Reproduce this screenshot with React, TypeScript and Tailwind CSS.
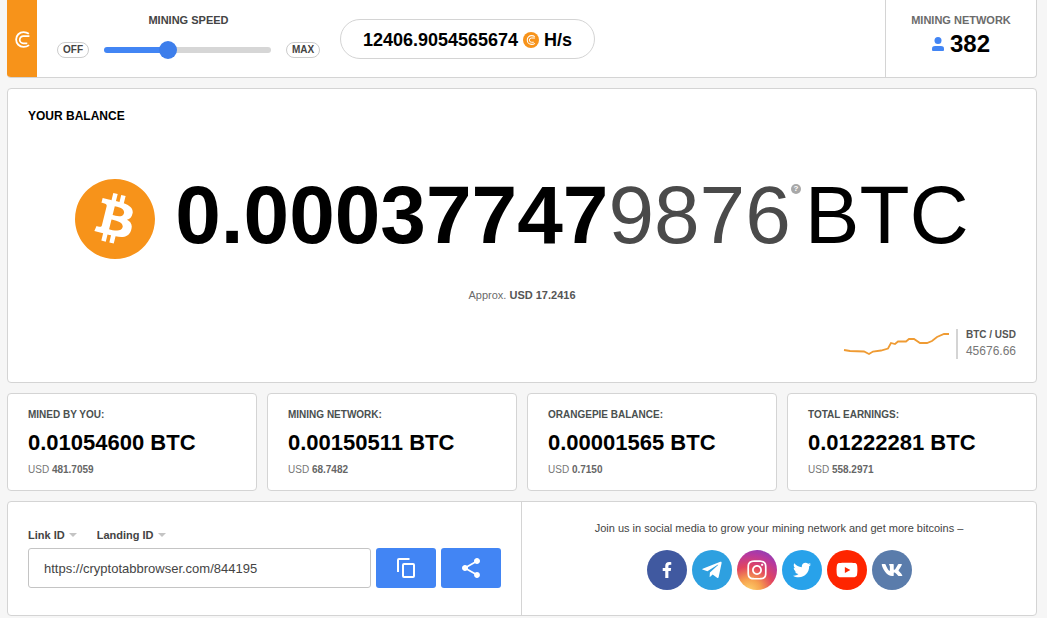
import { useState } from "react";
import { FaFacebookF, FaTelegramPlane, FaInstagram, FaTwitter, FaYoutube, FaVk } from "react-icons/fa";
import { MdShare } from "react-icons/md";
import { SiBitcoin } from "react-icons/si";

const stats = [
  { label: "MINED BY YOU:", btc: "0.01054600", usd: "481.7059" },
  { label: "MINING NETWORK:", btc: "0.00150511", usd: "68.7482" },
  { label: "ORANGEPIE BALANCE:", btc: "0.00001565", usd: "0.7150" },
  { label: "TOTAL EARNINGS:", btc: "0.01222281", usd: "558.2971" },
];

const socials = [
  { name: "Facebook", Icon: FaFacebookF, bg: "bg-[#4059a0]", size: "size-4" },
  { name: "Telegram", Icon: FaTelegramPlane, bg: "bg-[#2ea0e0]", size: "size-[22px]" },
  {
    name: "Instagram",
    Icon: FaInstagram,
    bg: "bg-[radial-gradient(circle_at_30%_105%,#fdd870_0%,#f7a14e_25%,#e2455f_50%,#b638a0_75%,#6a45c8_100%)]",
    size: "size-[22px]",
  },
  { name: "Twitter", Icon: FaTwitter, bg: "bg-[#28a2ea]", size: "size-[18px]" },
  { name: "YouTube", Icon: FaYoutube, bg: "bg-[#fe2500]", size: "size-[22px]" },
  { name: "VK", Icon: FaVk, bg: "bg-[#5a7cab]", size: "size-[22px]" },
];

function TabMark({ className }: { className: string }) {
  return (
    <svg viewBox="0 0 16 16" fill="none" stroke="currentColor" className={className} aria-hidden="true">
      <path d="M14 2.600C12.500 1.500 11 1 9 1a7 7 0 0 0 0 14c2 0 3.700-.5 5.200-1.700" strokeWidth="1.7" />
      <path d="M14.500 4.800H8.800a3.400 3.400 0 0 0 0 6.800h3.700" strokeWidth="1.6" />
    </svg>
  );
}

function PersonIcon() {
  return (
    <svg viewBox="0 0 12 14" fill="currentColor" className="w-3 h-3.5 text-[#4285f4]" aria-hidden="true">
      <circle cx="6" cy="3.500" r="3.500" />
      <path d="M0 13v-1.500C0 9.700 1.500 9 3 9h6c1.500 0 3 .7 3 2.500V13a1 1 0 0 1-1 1H1a1 1 0 0 1-1-1z" />
    </svg>
  );
}

function CopyIcon() {
  return (
    <svg viewBox="0 0 18 20" fill="none" stroke="currentColor" strokeWidth="2" className="w-[18px] h-5" aria-hidden="true">
      <path d="M1 14V2a1 1 0 0 1 1-1h10.500" />
      <rect x="6" y="6" width="11" height="13" rx="1" />
    </svg>
  );
}

function Header() {
  const [speed, setSpeed] = useState(37);
  // The filled part ends under the centre of the 18px thumb
  const fill = `calc(9px + (100% - 18px) * ${speed / 100})`;

  return (
    <header className="flex h-[78px] bg-white border-r border-b border-[#d4d4d4] rounded-b overflow-hidden">
      <a href="#" aria-label="Home" className="-mb-px w-[30px] shrink-0 flex items-center justify-center bg-[#f7931a] text-white">
        <TabMark className="size-[17px]" />
      </a>

      {/* Mining speed */}
      <div className="ml-5 pt-3 w-[263px] shrink-0">
        <label htmlFor="speed" className="block text-center text-[11px] leading-4 font-bold text-[#444]">
          MINING SPEED
        </label>
        <div className="mt-3.5 h-4 flex items-center justify-between text-[10px] leading-[14px] font-bold text-[#444]">
          <button className="w-8 h-4 rounded-full border border-[#ccc]">OFF</button>
          <input
            id="speed"
            type="range"
            min={0}
            max={100}
            value={speed}
            onChange={(e) => setSpeed(Number(e.target.value))}
            style={{ backgroundImage: `linear-gradient(to right, #4285f4 ${fill}, #d6d6d6 ${fill})` }}
            className="w-[167px] h-1.5 rounded-full appearance-none cursor-pointer [&::-webkit-slider-thumb]:appearance-none [&::-webkit-slider-thumb]:size-[18px] [&::-webkit-slider-thumb]:rounded-full [&::-webkit-slider-thumb]:bg-[#3d7eeb]"
          />
          <button className="w-[34px] h-4 rounded-full border border-[#ccc]">MAX</button>
        </div>
      </div>

      <div className="ml-5 mt-[19px] h-10 w-[255px] shrink-0 flex items-center justify-center gap-[5px] rounded-full border border-[#d4d4d4] pt-0.5 text-lg font-bold text-black">
        <span>12406.9054565674</span>
        <span className="size-4 rounded-full bg-[#f7931a] text-white flex items-center justify-center">
          <TabMark className="size-2.5" />
        </span>
        <span>H/s</span>
      </div>

      <div className="ml-auto w-[151px] shrink-0 border-l border-[#d4d4d4] pt-3 text-center">
        <div className="text-[11px] leading-4 font-bold text-[#6b6b6b]">MINING NETWORK</div>
        <div className="mt-0.5 flex items-center justify-center gap-1.5 text-2xl leading-7 font-bold text-black">
          <PersonIcon />
          382
        </div>
      </div>
    </header>
  );
}

function Balance() {
  return (
    <section className="mt-2.5 bg-white border border-[#d4d4d4] rounded px-5 pt-[19px] pb-[23px]">
      <h1 className="text-xs leading-4 font-bold text-black">YOUR BALANCE</h1>

      <div className="mt-[47px] flex items-center justify-center">
        <SiBitcoin className="size-20 shrink-0 mt-2 text-[#f7931a]" />
        <div className="ml-5 flex text-[82px] leading-[82px] text-black">
          <span className="font-bold">0.00037747</span>
          <span className="text-[#4a4a4a]">9876</span>
          <button
            aria-label="About the balance"
            className="mt-2.5 size-2.5 rounded-full bg-[#a8a8a8] text-white text-[8px] leading-[10px] font-bold"
          >
            ?
          </button>
          <span className="ml-1">BTC</span>
        </div>
      </div>

      <p className="mt-7 text-center text-[11px] leading-4 text-[#6b6b6b]">
        Approx. <b className="text-[#555]">USD 17.2416</b>
      </p>

      {/* Rate */}
      <div className="mt-[26px] flex justify-end">
        <svg viewBox="0 0 106 30" className="w-[106px] h-[30px]" fill="none" stroke="#ef9b33" strokeWidth="1.8" aria-hidden="true">
          <path d="M1 21l6 1 14 .5 5 2.500 4-2.500 8-1 7-2 3-5.500 4 1 3-2.500h8l3-2.500h5l6 4h7l5-2 5-4 7-3h5" />
        </svg>
        <div className="ml-[7px] border-l-2 border-[#d4d4d4] pl-2">
          <div className="text-[10px] leading-3 font-bold text-[#555]">BTC / USD</div>
          <div className="mt-[3px] text-xs leading-[15px] text-[#777]">45676.66</div>
        </div>
      </div>
    </section>
  );
}

function LinkSelect({ label }: { label: string }) {
  return (
    <div className="flex items-center gap-1">
      <select aria-label={label} className="appearance-none field-sizing-content bg-transparent text-[11px] leading-4 font-bold text-[#444]">
        <option>{label}</option>
      </select>
      <span className="border-x-4 border-t-4 border-x-transparent border-t-[#c4c4c4]" />
    </div>
  );
}

export default function App() {
  return (
    <div className="min-h-screen bg-[#f6f6f6] pl-[7px] pr-2.5 pb-0.5 font-['Liberation_Sans',Arial,sans-serif]">
      <Header />
      <Balance />

      <section className="mt-2.5 grid grid-cols-4 gap-2.5">
        {stats.map((s) => (
          <div key={s.label} className="bg-white border border-[#d4d4d4] rounded px-5 pt-[13px] pb-3">
            <h2 className="text-[10px] leading-4 font-bold text-[#4a5050]">{s.label}</h2>
            <div className="mt-1.5 text-[22px] leading-7 font-bold text-black">{s.btc} BTC</div>
            <div className="mt-[5px] text-[10px] leading-4 text-[#777]">
              USD <b className="text-[#666]">{s.usd}</b>
            </div>
          </div>
        ))}
      </section>

      <section className="mt-2.5 grid grid-cols-2 bg-white border border-[#d4d4d4] rounded">
        <div className="border-r border-[#d4d4d4] px-5 pt-[25px] pb-[27px]">
          <div className="flex gap-5">
            <LinkSelect label="Link ID" />
            <LinkSelect label="Landing ID" />
          </div>
          <div className="mt-[5px] flex gap-[5px]">
            <input
              aria-label="Referral link"
              defaultValue="https://cryptotabbrowser.com/844195"
              className="min-w-0 flex-1 h-10 rounded-[3px] border border-[#c4c4c4] px-[15px] text-[13px] text-[#444]"
            />
            <button aria-label="Copy link" className="w-[60px] h-10 rounded-[3px] bg-[#4285f4] text-white flex items-center justify-center">
              <CopyIcon />
            </button>
            <button aria-label="Share link" className="w-[60px] h-10 rounded-[3px] bg-[#4285f4] text-white flex items-center justify-center">
              <MdShare className="size-6" />
            </button>
          </div>
        </div>

        <div className="pt-[18px] text-center">
          <p className="text-[11px] leading-4 text-[#444]">
            Join us in social media to grow your mining network and get more bitcoins –
          </p>
          <div className="mt-3.5 flex justify-center gap-[5px]">
            {socials.map(({ name, Icon, bg, size }) => (
              <a key={name} href="#" aria-label={name} className={`size-10 rounded-full flex items-center justify-center text-white ${bg}`}>
                <Icon className={size} />
              </a>
            ))}
          </div>
        </div>
      </section>
    </div>
  );
}
